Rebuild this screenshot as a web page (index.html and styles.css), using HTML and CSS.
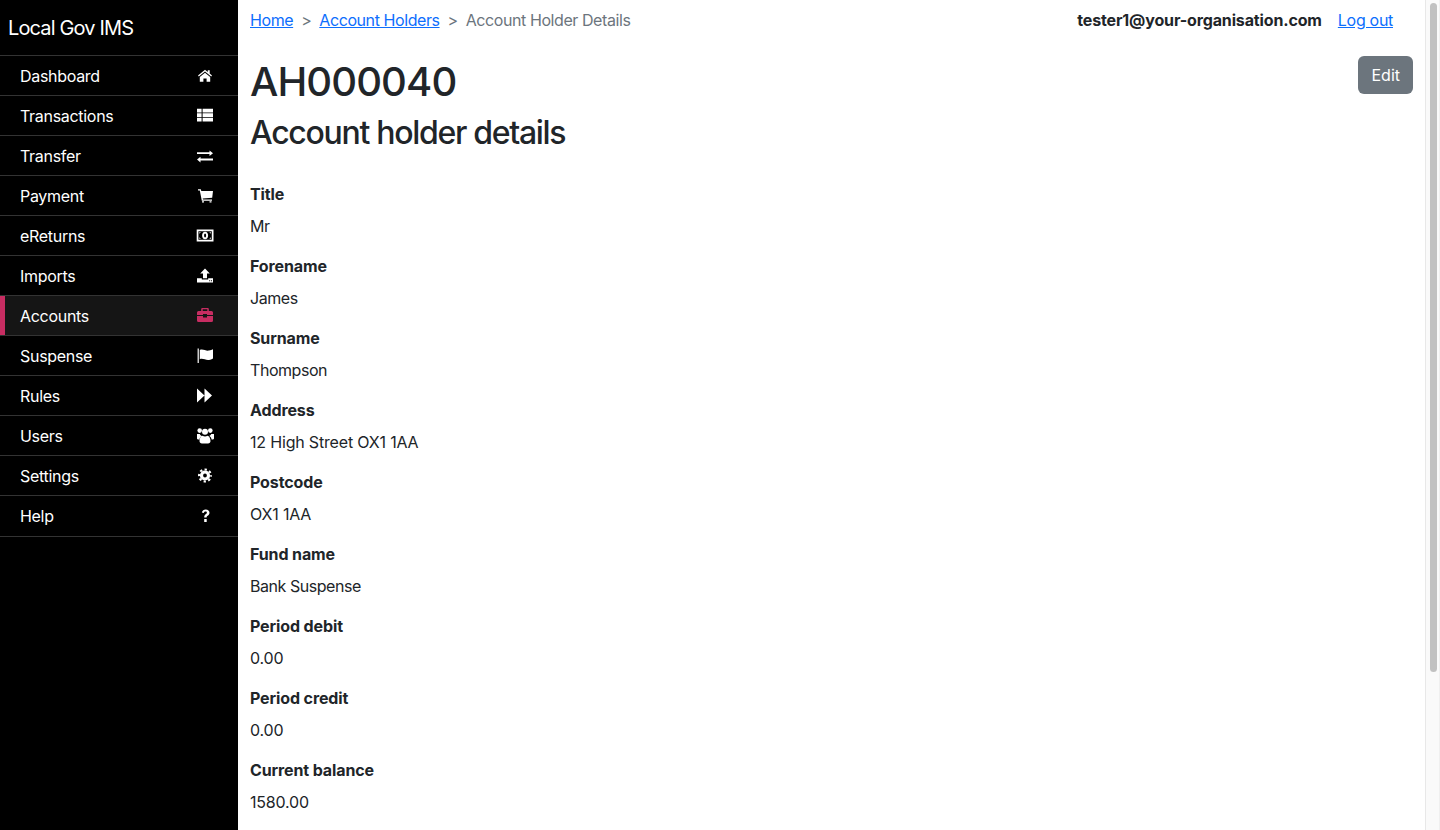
FILE: index.html
```html
<!DOCTYPE html>
<html lang="en">
<head>
<meta charset="utf-8">
<title>Account Holder Details</title>
<link rel="stylesheet" href="styles.css">
</head>
<body>
<aside class="sidebar">
  <div class="brand">Local Gov IMS</div>
  <nav>
    <a class="nav-item" href="#"><span>Dashboard</span><svg class="icon" viewBox="0 0 18 16"><path d="M9 1.800 2 7.500l.8 1L9 3.500l6.200 5 .8-1-2.300-1.900V2.300h-1.900v1.800zM3.800 9v4.800h3.600V10.400h3.200v3.400h3.600V9L9 4.800z"/></svg></a>
    <a class="nav-item" href="#"><span>Transactions</span><svg class="icon" viewBox="0 0 18 16"><path d="M1 .7h4.600v3.800H1zM6.600.7H17v3.800H6.600zM1 5.300h4.600v3.600H1zM6.600 5.300H17v3.600H6.600zM1 9.700h4.600v3.800H1zM6.600 9.700H17v3.800H6.600z"/></svg></a>
    <a class="nav-item" href="#"><span>Transfer</span><svg class="icon" viewBox="0 0 18 16"><path d="M1 4.300h12.500V2.500L17 5.200l-3.500 2.700V6.100H1zM17 10.400H4.500V8.800L1 11.600l3.500 2.800v-1.900H17z"/></svg></a>
    <a class="nav-item" href="#"><span>Payment</span><svg class="icon" viewBox="0 0 18 16"><path d="M2 1.300h2.800l.5 1.700H17l-.8 6.800-9.500.8.300 1H16v1.200H5.800L3.800 2.500H2z"/><path d="M6 13.200h2v1.300H6zM13.500 13.200h2v1.300h-2z"/></svg></a>
    <a class="nav-item" href="#"><span>eReturns</span><svg class="icon" viewBox="0 0 18 16"><path fill-rule="evenodd" d="M.7 1.600h16.800v11.800H.7zM2.400 3.200v8.600h13.400V3.200z"/><path d="M3.300 4.200h1.600L3.300 5.800zM14.900 4.200h-1.600l1.600 1.600zM3.300 10.800h1.600L3.300 9.200zM14.900 10.800h-1.600l1.600-1.600z"/><path fill-rule="evenodd" d="M9.100 3.700c1.800 0 3 1.700 3 3.800s-1.200 3.800-3 3.800-3-1.700-3-3.800 1.200-3.800 3-3.800zM9.100 5.500c-.6 0-1 .9-1 2s.4 2 1 2 1-.9 1-2-.4-2-1-2z"/></svg></a>
    <a class="nav-item" href="#"><span>Imports</span><svg class="icon" viewBox="0 0 18 16"><path d="M9 .5 13.800 5.500H11v4.800H7V5.500H4.200z"/><path fill-rule="evenodd" d="M1 10.200h4.800v1.300h6.400v-1.300H17v4.300H1zM13.200 12.200v1h1v-1zM15 12.200v1h1v-1z"/></svg></a>
    <a class="nav-item active" href="#"><span>Accounts</span><svg class="icon" viewBox="0 0 18 16"><path d="M6.200 0h5.600a1 1 0 0 1 1 1v2h2.700A1.500 1.500 0 0 1 17 4.500V7h-6V6H7v1H1V4.500A1.500 1.500 0 0 1 2.500 3h2.700V1a1 1 0 0 1 1-1zm.5 1.300V3h4.600V1.300zM1 8h6v1.500h4V8h6v4.500a1.500 1.500 0 0 1-1.500 1.500h-13A1.500 1.500 0 0 1 1 12.500z"/></svg></a>
    <a class="nav-item" href="#"><span>Suspense</span><svg class="icon" viewBox="0 0 18 16"><path d="M1.600.5h1.200V15H1.600zM3.800 2c3.200-1.300 5.800 1.200 9.200.6 1.600-.3 3-.8 4-1.300v9.300c-1.200.7-2.600 1.200-4 1.400-3.500.5-6-2-9.200-.8z"/></svg></a>
    <a class="nav-item" href="#"><span>Rules</span><svg class="icon" viewBox="0 0 18 16"><path d="M1 .5 8.500 7.500 1 14.500zM8.500.5 16 7.500l-7.500 7z"/></svg></a>
    <a class="nav-item" href="#"><span>Users</span><svg class="icon" viewBox="0 0 18 16"><circle cx="3.700" cy="2.600" r="2.300"/><circle cx="14.300" cy="2.600" r="2.300"/><circle cx="9" cy="3.700" r="3"/><path d="M1 6h2.800c.5 1 1 1.500 1.800 2-1.300.7-2 2-2.200 3.500H2c-.7 0-1-.5-1-1.200zM18 6h-2.800c-.5 1-1 1.500-1.800 2 1.300.7 2 2 2.200 3.500H17c.7 0 1-.5 1-1.200zM6.500 7.800c1.500 1 3.500 1 5 0 1.700.5 3 2.300 3 5.200 0 1.500-1 2.500-2.500 2.500H6c-1.500 0-2.500-1-2.500-2.500 0-2.900 1.300-4.700 3-5.200z"/></svg></a>
    <a class="nav-item" href="#"><span>Settings</span><svg class="icon" viewBox="0 0 18 16"><circle class="gear-teeth" cx="9" cy="7.500" r="6"/><circle class="gear-ring" cx="9" cy="7.500" r="3.500"/></svg></a>
    <a class="nav-item" href="#"><span>Help</span><svg class="icon" viewBox="0 0 18 16"><path d="M5.800 4.400C6.400 2.500 7.700 1.500 9.700 1.500c2.300 0 3.800 1.300 3.800 3.200 0 1.500-.8 2.300-1.800 3-.8.500-1.100.9-1.100 1.800H8.200c0-1.700.5-2.500 1.500-3.200.8-.5 1.200-.9 1.200-1.500 0-.7-.5-1.200-1.300-1.200-.9 0-1.400.5-1.800 1.400zM8.200 11h2.500v3H8.200z"/></svg></a>
  </nav>
</aside>
<main class="content">
  <header class="topbar">
    <ol class="breadcrumb">
      <li><a href="#">Home</a></li>
      <li class="sep">&gt;</li>
      <li><a href="#">Account Holders</a></li>
      <li class="sep">&gt;</li>
      <li class="current">Account Holder Details</li>
    </ol>
    <div class="user">
      <strong>tester1@your-organisation.com</strong>
      <a href="#">Log out</a>
    </div>
  </header>
  <div class="title-row">
    <h1>AH000040</h1>
    <a class="btn" href="#">Edit</a>
  </div>
  <h2>Account holder details</h2>
  <dl class="details">
    <dt>Title</dt><dd>Mr</dd>
    <dt>Forename</dt><dd>James</dd>
    <dt>Surname</dt><dd>Thompson</dd>
    <dt>Address</dt><dd class="num">12 High Street OX1 1AA</dd>
    <dt>Postcode</dt><dd class="num">OX1 1AA</dd>
    <dt>Fund name</dt><dd>Bank Suspense</dd>
    <dt>Period debit</dt><dd class="num">0.00</dd>
    <dt>Period credit</dt><dd class="num">0.00</dd>
    <dt>Current balance</dt><dd class="num">1580.00</dd>
  </dl>
</main>
<div class="scrollbar"><div class="thumb"></div></div>
</body>
</html>
```
FILE: styles.css
```css
* { box-sizing: border-box; }
body {
  margin: 0;
  height: 100vh;
  overflow: hidden;
  display: flex;
  font-family: Inter, "Liberation Sans", sans-serif;
  font-size: 16px;
  line-height: 24px;
  letter-spacing: -0.3px;
  color: #212529;
  background: #fff;
}
a { color: #0d6efd; }
.sidebar { width: 238px; flex: none; background: #000; color: #fff; }
.brand { height: 56px; padding: 16px 8px 0; font-size: 20px; letter-spacing: -0.85px; border-bottom: 1px solid #333; }
.nav-item {
  height: 40px;
  display: flex;
  align-items: center;
  justify-content: space-between;
  padding: 0 24px 0 20px;
  color: #fff;
  text-decoration: none;
  border-bottom: 1px solid #333;
}
.nav-item:last-child { height: 41px; }
.nav-item.active { background: #151515; box-shadow: inset 5px 0 0 #c72d62; }
.nav-item.active .icon { fill: #c72d62; }
.icon { width: 18px; height: 16px; fill: #fff; }
.gear-teeth { fill: none; stroke: #fff; stroke-width: 2; stroke-dasharray: 2.36 2.352; stroke-dashoffset: 1.18; }
.gear-ring { fill: none; stroke: #fff; stroke-width: 3.2; }
.content { flex: 1; min-width: 0; padding: 8px 12px 0; }
.topbar { display: flex; justify-content: space-between; height: 24px; padding-right: 20px; }
.breadcrumb { display: flex; gap: 8px; margin: 0; padding: 0; list-style: none; letter-spacing: -0.42px; }
.sep, .current { color: #6c757d; }
.user { display: flex; gap: 16px; }
.user strong { font-weight: 700; letter-spacing: -0.14px; }
.title-row { display: flex; justify-content: space-between; align-items: flex-start; margin-top: 24px; height: 50px; }
h1 { margin: 2px 0 0; font-size: 40px; line-height: 48px; font-weight: 500; letter-spacing: -0.9px; }
h2 { margin: 8px 0 0; font-size: 32px; line-height: 38px; font-weight: 500; letter-spacing: -1.3px; }
.btn {
  display: block;
  padding: 7px 13px;
  color: #fff;
  background: #6c757d;
  border-radius: 6px;
  text-decoration: none;
  letter-spacing: 0;
}
.details { margin: 30px 0 0; }
dt { font-weight: 700; letter-spacing: -0.12px; margin-bottom: 8px; }
dd { margin: 0 0 16px; letter-spacing: -0.45px; }
dd.num { letter-spacing: -0.18px; }
.scrollbar {
  width: 15px;
  flex: none;
  padding: 3px 2px 0 4px;
  background: #fafafa;
  border-left: 1px solid #e8e8e8;
  border-right: 1px solid #f0f0f0;
}
.thumb { height: 669px; background: #c1c1c1; border-radius: 4px; }
```
